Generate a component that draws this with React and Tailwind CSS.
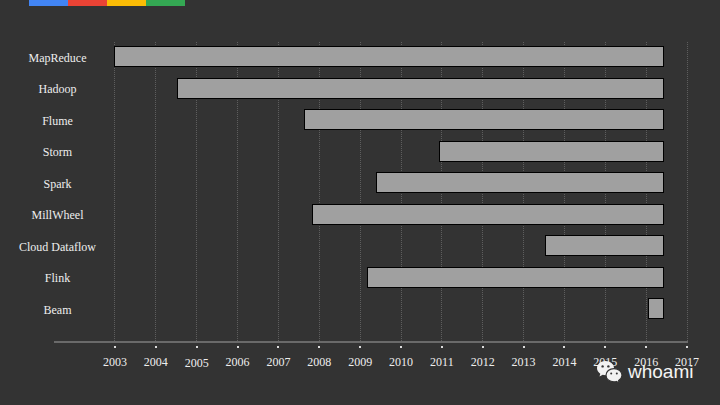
import React from 'react';

// bar edges in px on the 720 wide slide (left edge, right edge)
const bars = [
  { name: 'MapReduce', from: 114, to: 664 },
  { name: 'Hadoop', from: 177, to: 664 },
  { name: 'Flume', from: 304, to: 664 },
  { name: 'Storm', from: 439, to: 664 },
  { name: 'Spark', from: 376, to: 664 },
  { name: 'MillWheel', from: 312, to: 664 },
  { name: 'Cloud Dataflow', from: 545, to: 664 },
  { name: 'Flink', from: 367, to: 664 },
  { name: 'Beam', from: 648, to: 664 },
];

const years = [];
for (let y = 2003; y <= 2017; y++) years.push(y);

const TRACK_LEFT = 115;

const WeChatIcon = () => (
  <svg width="27" height="24" viewBox="0 0 27 24">
    <path d="M9.5 1C4.8 1 1 4.2 1 8.1c0 2.3 1.3 4.3 3.3 5.6L3.5 16.5l3.2-1.7c0.9 0.3 1.8 0.4 2.8 0.4 4.7 0 8.5-3.2 8.5-7.1S14.2 1 9.5 1z" fill="#f2f2f2" />
    <circle cx="6.6" cy="6.4" r="1.2" fill="#333" />
    <circle cx="12.4" cy="6.4" r="1.2" fill="#333" />
    <path d="M18 8.6c-4.5 0-8 3-8 6.6s3.5 6.6 8 6.6c0.8 0 1.6-0.1 2.4-0.3l2.9 1.5-0.7-2.5c1.9-1.2 3.4-3.1 3.4-5.3 0-3.6-3.5-6.6-8-6.6z" fill="#f2f2f2" stroke="#333" strokeWidth="1.2" />
    <circle cx="15.2" cy="13.6" r="1" fill="#333" />
    <circle cx="20.8" cy="13.6" r="1" fill="#333" />
  </svg>
);

const App = () => {
  return (
    <div
      className="w-[720px] h-[405px] bg-[#333333] relative overflow-hidden"
      style={{ fontFamily: '"Liberation Serif", "Times New Roman", serif' }}
    >
      {/* google colour strip */}
      <div className="flex ml-[29px] h-[6px]">
        <div className="w-[39px] bg-[#4285f4]"></div>
        <div className="w-[39px] bg-[#ea4335]"></div>
        <div className="w-[39px] bg-[#fbbc05]"></div>
        <div className="w-[39px] bg-[#34a853]"></div>
      </div>

      {/* chart */}
      <div className="relative mt-[36px] h-[299px]">
        <div className="absolute top-0 bottom-0 left-[94.57px] flex">
          {years.map(y => (
            <div key={y} className="w-[40.86px] flex justify-center">
              <div className="w-0 h-full border-l border-dotted border-[#5e5e5e]"></div>
            </div>
          ))}
        </div>

        <div className="relative pt-[4px]">
          {bars.map(b => (
            <div key={b.name} className="h-[31.5px] flex items-start">
              <div className="w-[115px] pt-[1.5px] text-center text-[12px] leading-[21px] text-[#eeeeee]">{b.name}</div>
              <div className="flex-1 h-[21px]">
                <div
                  className="h-[21px] bg-[#a0a0a0] border-[1.5px] border-black"
                  style={{ marginLeft: b.from - TRACK_LEFT, width: b.to - b.from }}
                ></div>
              </div>
            </div>
          ))}
        </div>
      </div>

      {/* axis */}
      <div className="ml-[54px] w-[634px] h-[2px] bg-[#6a6a6a]"></div>
      <div className="flex ml-[94.57px] mt-[3px]">
        {years.map(y => (
          <div key={y} className="w-[40.86px] flex justify-center">
            <div className="w-[2px] h-[1.5px] bg-[#dddddd]"></div>
          </div>
        ))}
      </div>
      <div className="flex ml-[94.57px] mt-[8px]">
        {years.map(y => (
          <div
            key={y}
            className={`w-[40.86px] text-center text-[12px] leading-[12px] text-[#eeeeee] ${y === 2005 ? 'pt-[1px]' : ''}`}
          >
            {y}
          </div>
        ))}
      </div>

      {/* watermark */}
      <div className="absolute left-[596px] top-[360px] flex items-center gap-[5px]">
        <WeChatIcon />
        <span
          className="text-[19px] leading-[20px] text-[#f4f4f4]"
          style={{ fontFamily: '"Liberation Sans", Arial, sans-serif' }}
        >
          whoami
        </span>
      </div>
    </div>
  );
};

export default App;
